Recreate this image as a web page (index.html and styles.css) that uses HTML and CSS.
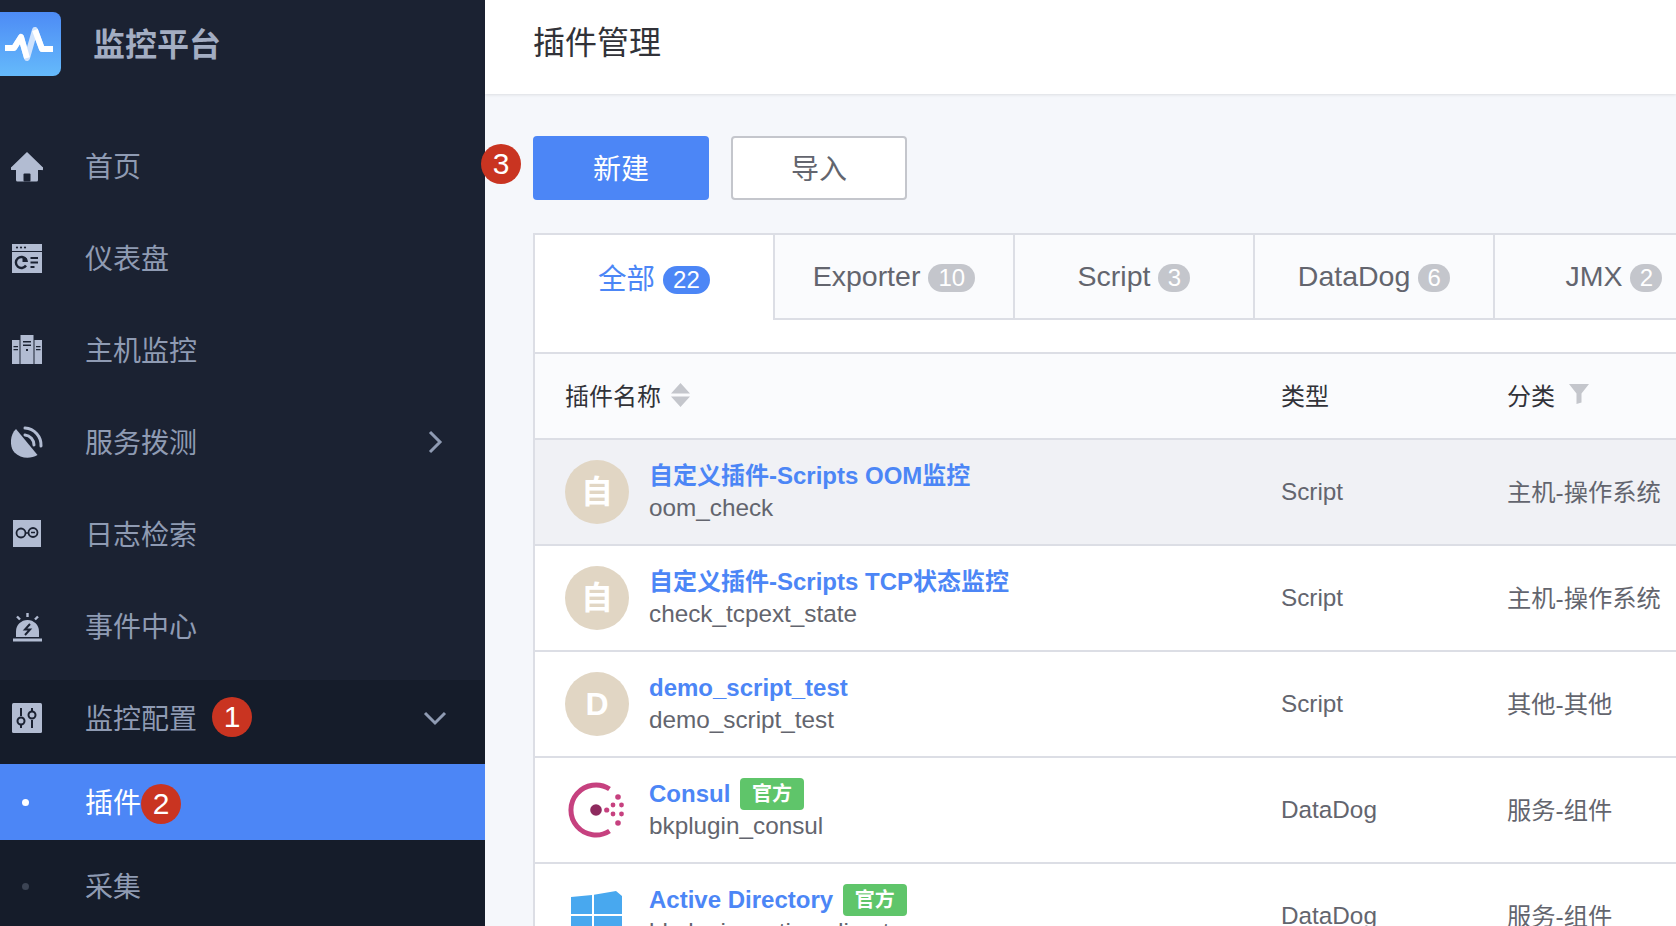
FILE: index.html
```html
<!DOCTYPE html>
<html lang="zh-CN">
<head>
    <meta charset="UTF-8">
    <meta name="viewport" content="width=device-width, initial-scale=1.0">
    <title>插件管理</title>
    <link rel="stylesheet" href="styles.css">
</head>
<body>
    <div class="sidebar">
        <div class="brand">
            <div class="brand-logo">
                <svg width="61" height="64" viewBox="0 0 61 64">
                    <polyline points="5,36 14,36 21,25 27,46 35,18 42,37 53,37" fill="none" stroke="#cfe3fd" stroke-width="6" stroke-linejoin="round"/>
                    <polyline points="5,36 14,36 21,25 27,46" fill="none" stroke="#fff" stroke-width="6" stroke-linejoin="round"/>
                    <polyline points="35,18 42,37 53,37" fill="none" stroke="#fff" stroke-width="6" stroke-linejoin="round"/>
                </svg>
            </div>
            <span class="brand-name">监控平台</span>
        </div>

        <div class="menu-item">
            <svg class="menu-icon" viewBox="0 0 32 32">
                <path d="M16 2 31.500 17a1.500 1.500 0 0 1-1 3H27V30a1.500 1.500 0 0 1-1.500 1.500H6.500A1.500 1.500 0 0 1 5 30V20H1.500a1.500 1.500 0 0 1-1-3Z" fill="#b2bcd2"/>
                <rect x="12.500" y="23.500" width="7" height="8" rx="1" fill="#1b2232"/>
            </svg>
            <span class="menu-text">首页</span>
        </div>
        <div class="menu-item">
            <svg class="menu-icon" viewBox="0 0 32 32">
                <path d="M1 2h30v7H1Z" fill="#b2bcd2"/>
                <path d="M1 10h30v21H1Z" fill="#b2bcd2"/>
                <circle cx="6" cy="5.500" r="1.100" fill="#1b2232"/>
                <circle cx="10" cy="5.500" r="1.100" fill="#1b2232"/>
                <circle cx="14" cy="5.500" r="1.100" fill="#1b2232"/>
                <path d="M15 17.500a5.500 5.500 0 1 0 0 6" fill="none" stroke="#1b2232" stroke-width="2.400"/>
                <path d="M11.500 14.500a6 6 0 0 1 5.500 5.500h-5.500Z" fill="#1b2232"/>
                <path d="M19.500 15h7.500v2h-7.500ZM19.500 19.500h7.500v2h-7.500ZM19.500 24h4v2h-4Z" fill="#1b2232"/>
            </svg>
            <span class="menu-text">仪表盘</span>
        </div>
        <div class="menu-item">
            <svg class="menu-icon" viewBox="0 0 32 32">
                <path d="M1 6h7.500v24H1ZM23.500 6H31v24h-7.500ZM9.500 1h13v29h-13Z" fill="#b2bcd2"/>
                <path d="M12 7h8v1.500h-8ZM12 10.500h8V12h-8ZM2.500 12H7v1.200H2.500ZM2.500 15H7v1.200H2.500ZM25 12h4.500v1.200H25ZM25 15h4.500v1.200H25Z" fill="#1b2232"/>
                <rect x="15" y="15" width="2" height="2" fill="#1b2232"/>
            </svg>
            <span class="menu-text">主机监控</span>
        </div>
        <div class="menu-item">
            <svg class="menu-icon" viewBox="0 0 32 32">
                <path d="M5 3C-1.500 9-1.500 21 3.500 26.500 9.500 32.500 19 33.500 26.500 29Z" fill="#b2bcd2"/>
                <path d="M14 2A17 17 0 0 1 30 20M14 9A10 10 0 0 1 23 19" fill="none" stroke="#b2bcd2" stroke-width="3" stroke-linecap="round"/>
            </svg>
            <span class="menu-text">服务拨测</span>
            <svg class="menu-arrow" viewBox="0 0 24 24"><polyline points="7,2 17,12 7,22" fill="none" stroke="#8f9bb3" stroke-width="3"/></svg>
        </div>
        <div class="menu-item">
            <svg class="menu-icon" viewBox="0 0 32 32">
                <rect x="2" y="2" width="28" height="27" fill="#b2bcd2"/>
                <circle cx="10" cy="15" r="4.500" fill="none" stroke="#1b2232" stroke-width="1.800"/>
                <circle cx="22" cy="14.500" r="4.500" fill="none" stroke="#1b2232" stroke-width="1.800"/>
                <path d="M20 14.500h4M15 15h2.500" stroke="#1b2232" stroke-width="1.500"/>
            </svg>
            <span class="menu-text">日志检索</span>
        </div>
        <div class="menu-item">
            <svg class="menu-icon" viewBox="0 0 32 32">
                <path d="M5 27V21.500a11.500 11.500 0 0 1 23 0V27Z" fill="#b2bcd2"/>
                <rect x="2" y="28.500" width="29" height="3" fill="#b2bcd2"/>
                <path d="M16.500 3v4M6 6.500 9 9.500M27 6.500 24 9.500" stroke="#b2bcd2" stroke-width="2.400"/>
                <path d="M19 14 14 19.500h5L14 25" fill="none" stroke="#1b2232" stroke-width="2"/>
            </svg>
            <span class="menu-text">事件中心</span>
        </div>

        <div class="submenu">
            <div class="menu-item menu-item-open">
                <svg class="menu-icon" viewBox="0 0 32 32">
                    <rect x="1" y="1" width="30" height="30" rx="1.500" fill="#b2bcd2"/>
                    <path d="M10 6v8M10 23v3M21 6v3M21 18v8" stroke="#1b2232" stroke-width="2"/>
                    <circle cx="10" cy="19" r="3.500" fill="none" stroke="#1b2232" stroke-width="2"/>
                    <circle cx="21" cy="13" r="3.500" fill="none" stroke="#1b2232" stroke-width="2"/>
                </svg>
                <span class="menu-text">监控配置</span>
                <span class="step step-one">1</span>
                <svg class="menu-arrow" viewBox="0 0 24 24"><polyline points="2,7 12,17 22,7" fill="none" stroke="#8f9bb3" stroke-width="3"/></svg>
            </div>
            <div class="sub-item sub-item-active">
                <i class="sub-dot"></i>
                <span class="menu-text">插件</span>
                <span class="step step-two">2</span>
            </div>
            <div class="sub-item">
                <i class="sub-dot"></i>
                <span class="menu-text">采集</span>
            </div>
        </div>
    </div>

    <div class="main">
        <div class="page-title">插件管理</div>
        <div class="content">
            <div class="toolbar">
                <span class="step step-three">3</span>
                <button class="btn btn-primary">新建</button>
                <button class="btn">导入</button>
            </div>

            <div class="panel">
                <div class="tabs">
                    <div class="tab tab-active">全部 <span class="count">22</span></div>
                    <div class="tab">Exporter <span class="count">10</span></div>
                    <div class="tab">Script <span class="count count-round">3</span></div>
                    <div class="tab">DataDog <span class="count count-round">6</span></div>
                    <div class="tab">JMX <span class="count count-round">2</span></div>
                </div>

                <div class="row row-head">
                    <div class="cell-name">
                        <span>插件名称</span>
                        <svg class="sort-icon" viewBox="0 0 19 24">
                            <path d="M9.500 0 19 10.500H0ZM9.500 24 0 13.500H19Z" fill="#c4c6cc"/>
                        </svg>
                    </div>
                    <div>类型</div>
                    <div class="cell-cat">
                        <span>分类</span>
                        <svg class="filter-icon" viewBox="0 0 20 20">
                            <path d="M0 0H20L12.500 9.500V18.500L7.500 20V9.500Z" fill="#c4c6cc"/>
                        </svg>
                    </div>
                </div>

                <div class="row row-hover">
                    <div class="cell-name">
                        <div class="avatar">自</div>
                        <div>
                            <div class="plugin-name">自定义插件-Scripts OOM监控</div>
                            <div class="plugin-id">oom_check</div>
                        </div>
                    </div>
                    <div>Script</div>
                    <div class="cell-cjk">主机-操作系统</div>
                </div>
                <div class="row">
                    <div class="cell-name">
                        <div class="avatar">自</div>
                        <div>
                            <div class="plugin-name">自定义插件-Scripts TCP状态监控</div>
                            <div class="plugin-id">check_tcpext_state</div>
                        </div>
                    </div>
                    <div>Script</div>
                    <div class="cell-cjk">主机-操作系统</div>
                </div>
                <div class="row">
                    <div class="cell-name">
                        <div class="avatar">D</div>
                        <div>
                            <div class="plugin-name">demo_script_test</div>
                            <div class="plugin-id">demo_script_test</div>
                        </div>
                    </div>
                    <div>Script</div>
                    <div class="cell-cjk">其他-其他</div>
                </div>
                <div class="row">
                    <div class="cell-name">
                        <svg class="plugin-logo" viewBox="0 0 64 64">
                            <path d="M44.500 11A25 25 0 1 0 44.500 53" fill="none" stroke="#c6417f" stroke-width="5"/>
                            <circle cx="31" cy="32" r="5.800" fill="#8e2a5e"/>
                            <g fill="#c6417f">
                                <circle cx="41.700" cy="32" r="2.600"/>
                                <circle cx="48" cy="27" r="2.400"/>
                                <circle cx="48" cy="36" r="2.400"/>
                                <circle cx="56.500" cy="27" r="2.400"/>
                                <circle cx="56.500" cy="36" r="2.400"/>
                                <circle cx="53" cy="19" r="2.800"/>
                                <circle cx="53" cy="45" r="2.800"/>
                            </g>
                        </svg>
                        <div>
                            <div class="plugin-name">Consul <span class="tag">官方</span></div>
                            <div class="plugin-id">bkplugin_consul</div>
                        </div>
                    </div>
                    <div>DataDog</div>
                    <div class="cell-cjk">服务-组件</div>
                </div>
                <div class="row">
                    <div class="cell-name">
                        <svg class="plugin-logo" viewBox="0 0 64 64">
                            <path d="M6 13 27 11V30H6ZM29 10.700 51 7 57 12V30H29ZM6 32H27V53L6 51ZM29 32H57V57L29 53Z" fill="#48a8ef"/>
                        </svg>
                        <div>
                            <div class="plugin-name">Active Directory <span class="tag">官方</span></div>
                            <div class="plugin-id">bkplugin_active_directory</div>
                        </div>
                    </div>
                    <div>DataDog</div>
                    <div class="cell-cjk">服务-组件</div>
                </div>
            </div>
        </div>
    </div>
</body>
</html>
```

FILE: styles.css
```css
/* Page */
* {
    box-sizing: border-box;
}
html, body {
    margin: 0;
    height: 926px;
    overflow: hidden;
}
body {
    display: flex;
    background-color: #f5f7fb;
    font-family: "Liberation Sans", "Noto Sans CJK SC", sans-serif;
    font-size: 24.3px;
    color: #63656e;
}

/* Sidebar */
.sidebar {
    width: 485px;
    flex-shrink: 0;
    background-color: #1b2232;
    font-size: 28px;
    color: #8f9bb3;
}
.brand {
    height: 120px;
    padding-top: 12px;
    display: flex;
    align-items: flex-start;
}
.brand-logo {
    width: 61px;
    height: 64px;
    border-radius: 0 8px 8px 0;
    background: linear-gradient(180deg, #4d8bf5, #65bafb);
}
.brand-name {
    margin-left: 32px;
    font-size: 32px;
    line-height: 66px;
    font-weight: bold;
    color: #a3adc2;
}
.menu-item {
    height: 92px;
    padding-left: 11px;
    display: flex;
    align-items: center;
    position: relative;
}
.menu-text {
    padding-bottom: 2px;
}
.menu-icon {
    width: 32px;
    height: 32px;
    margin-right: 42px;
    flex-shrink: 0;
}
.menu-arrow {
    width: 24px;
    height: 24px;
    position: absolute;
    right: 38px;
    top: 34px;
}
.submenu {
    margin-top: 8px;
    height: 246px;
    background-color: #151c2a;
}
.menu-item-open {
    height: 76px;
}
.menu-item-open .menu-arrow {
    top: 26px;
}
.sub-item {
    height: 76px;
    margin-top: 8px;
    padding-left: 22px;
    display: flex;
    align-items: center;
    position: relative;
}
.sub-item-active {
    background-color: #4c86f6;
    color: #fff;
}
.sub-dot {
    width: 7px;
    height: 7px;
    margin-right: 56px;
    border-radius: 50%;
    background-color: #3c4454;
}
.sub-item-active .sub-dot {
    background-color: #fff;
}

/* Numbered markers */
.step {
    width: 40px;
    height: 40px;
    border-radius: 50%;
    background-color: #c93421;
    color: #fff;
    font-size: 30px;
    line-height: 40px;
    text-align: center;
    position: absolute;
}
.step-one {
    left: 212px;
    top: 17px;
}
.step-two {
    left: 141px;
    top: 20px;
}
.step-three {
    left: -52px;
    top: 8px;
}

/* Main */
.main {
    flex: 1;
    min-width: 0;
}
.page-title {
    height: 94px;
    padding-left: 48px;
    background-color: #fff;
    box-shadow: 0 1px 3px rgba(0, 0, 0, 0.1);
    font-size: 32px;
    line-height: 87px;
    color: #313238;
}
.content {
    padding: 42px 0 0 48px;
}
.toolbar {
    display: flex;
    gap: 22px;
    position: relative;
}
.btn {
    width: 176px;
    height: 64px;
    padding-bottom: 4px;
    border: 2px solid #c4c6cc;
    border-radius: 4px;
    background-color: #fff;
    font-family: inherit;
    font-size: 28px;
    color: #63656e;
}
.btn-primary {
    border: none;
    background-color: #4c86f6;
    color: #fff;
}

/* Plugin table, cut off by the window on the right */
.panel {
    margin-top: 33px;
    border: 2px solid #dcdee5;
    border-right: none;
    border-bottom: none;
    background-color: #fff;
    overflow: hidden;
}
.tabs {
    display: flex;
    height: 85px;
    margin-bottom: 32px;
}
.tab {
    width: 240px;
    flex-shrink: 0;
    border-right: 2px solid #dcdee5;
    border-bottom: 2px solid #dcdee5;
    background-color: #fafbfd;
    font-size: 28.500px;
    line-height: 82px;
    text-align: center;
}
.tab-active {
    border-bottom: none;
    background-color: #fff;
    color: #4c86f6;
    line-height: 88px;
}
.count {
    display: inline-block;
    min-width: 47px;
    height: 28px;
    padding: 0 6px;
    border-radius: 14px;
    background-color: #c4c6cc;
    color: #fff;
    font-size: 24px;
    line-height: 28px;
    vertical-align: 0;
}
.count-round {
    min-width: 32px;
    padding: 0;
}
.tab-active .count {
    background-color: #4c86f6;
    vertical-align: 1px;
}
.row {
    display: grid;
    grid-template-columns: 716px 226px 1fr;
    align-items: center;
    height: 106px;
    padding-left: 30px;
    border-bottom: 2px solid #dcdee5;
}
.row-head {
    height: 88px;
    padding-bottom: 4px;
    border-top: 2px solid #dcdee5;
    background-color: #fafbfd;
    color: #313238;
    font-size: 24px;
}
.row-hover {
    background-color: #f0f1f5;
}
.cell-cjk {
    padding-bottom: 4px;
    white-space: nowrap;
}
.cell-name {
    display: flex;
    align-items: center;
}
.cell-cat {
    display: flex;
    align-items: center;
}
.sort-icon {
    width: 19px;
    height: 24px;
    margin-left: 10px;
    margin-top: 2px;
}
.filter-icon {
    width: 20px;
    height: 20px;
    margin-left: 14px;
    margin-top: -1px;
}
.avatar {
    width: 64px;
    height: 64px;
    margin-right: 20px;
    border-radius: 50%;
    background-color: #e1d6c4;
    color: #fff;
    font-size: 32px;
    font-weight: bold;
    line-height: 64px;
    text-align: center;
}
.plugin-logo {
    width: 64px;
    height: 64px;
    margin-right: 20px;
}
.plugin-name {
    font-size: 24px;
    font-weight: bold;
    line-height: 32px;
    color: #4c86f6;
}
.plugin-id {
    line-height: 32px;
}
.tag {
    display: inline-block;
    width: 64px;
    height: 32px;
    margin-left: 3px;
    border-radius: 4px;
    background-color: #5fc56a;
    color: #fff;
    font-size: 20px;
    line-height: 32px;
    text-align: center;
    vertical-align: top;
}
```
